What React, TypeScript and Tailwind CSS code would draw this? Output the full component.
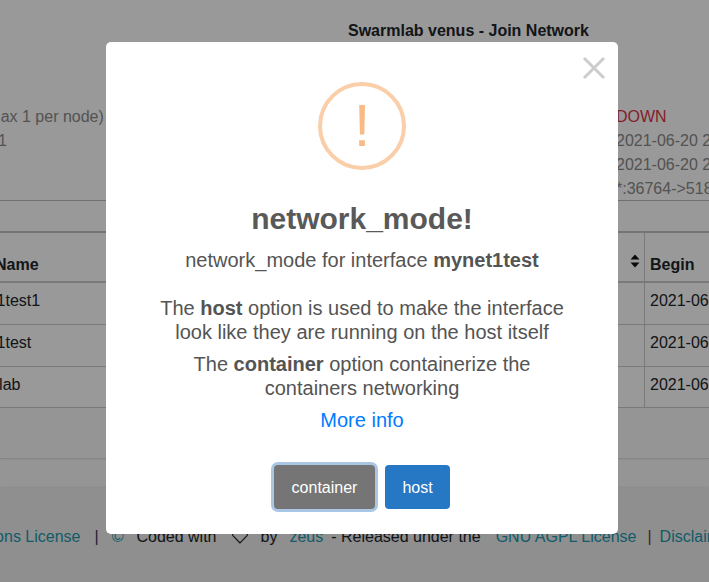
import React from 'react';

const infoLeft = ['(max 1 per node)', '1'];
const infoRight = ['2021-06-20 21:14:03', '2021-06-20 21:14:03', '*:36764->5180'];

const rows = [
  { name: 'mynet1test1', begin: '2021-06-20' },
  { name: 'mynet1test', begin: '2021-06-20' },
  { name: 'swarmlab', begin: '2021-06-20' },
];

const SortIcon = () => (
  <svg viewBox="0 0 10 14" className="w-[10px] h-[14px] fill-current">
    <path d="M5 0.5 9.5 5.5H0.5Z" />
    <path d="M5 13.5 0.5 8.5H9.5Z" />
  </svg>
);

const HeartIcon = () => (
  <svg viewBox="0 0 16 14" className="w-[16px] h-[14px] fill-none stroke-current" strokeWidth="1.2">
    <path d="M8 13 1.4 6.2C0 4.6 .3 2.200 2 1.100 3.800 0 5.900.8 8 3c2.100-2.200 4.200-3 6-1.900 1.700 1.100 2 3.500.6 5.100Z" />
  </svg>
);

export default function App() {
  return (
    <div className="relative h-[582px] w-[709px] overflow-hidden bg-white font-['Liberation_Sans',sans-serif] text-base text-[#212529]">
      {/* page behind the dialog */}
      <div className="h-[201px] border-b border-[#bbbbbb] flex">
        <div className="w-[106px] shrink-0 overflow-hidden pt-[105px] text-[#8a8a8a]">
          <div className="-ml-[18px] flex flex-col leading-6 whitespace-nowrap">
            <span>{infoLeft[0]}</span>
            <span className="ml-[18px] -indent-[2px]">{infoLeft[1]}</span>
          </div>
        </div>
        <div className="flex-1 flex flex-col min-w-0">
          <div className="pt-[21px] pl-[242px] h-[105px] font-bold text-[#212529] leading-5 whitespace-nowrap">Swarmlab venus - Join Network</div>
          <div className="pl-[510px] flex flex-col leading-6 whitespace-nowrap text-[#8a8a8a] overflow-hidden">
            <span className="text-[#dc3545]">DOWN</span>
            {infoRight.map((t, i) => (
              <span key={i}>{t}</span>
            ))}
          </div>
        </div>
      </div>

      <div className="h-[30px]" />

      <div className="border-t-2 border-[#c4c4c4] h-[177px] border-b border-b-[#c4c4c4]">
        <div className="flex h-[50px] border-b-2 border-[#cccccc] font-bold">
          <div className="flex-1 pt-[20px] overflow-hidden leading-6 whitespace-nowrap">
            <span className="block -ml-[5px]">Name</span>
          </div>
          <div className="w-[14px] pt-[21px] text-[#111111]"><SortIcon /></div>
          <div className="w-[65px] shrink-0 border-l border-[#cccccc] pl-[5px] pt-[20px] leading-6 whitespace-nowrap">Begin</div>
        </div>
        {rows.map((r, i) => (
          <div key={i} className="flex h-[42px] border-b border-[#cccccc] last:h-[41px]">
            <div className="flex-1 overflow-hidden pt-[6px] leading-6 whitespace-nowrap">
              <span className={i === 2 ? 'block -ml-[48px]' : 'block -ml-[47px]'}>{r.name}</span>
            </div>
            <div className="w-[65px] shrink-0 border-l border-[#cccccc] pl-[5px] pt-[6px] leading-6 overflow-hidden whitespace-nowrap">{r.begin}</div>
          </div>
        ))}
      </div>

      <div className="bg-[#f9f9f9]">
        <div className="h-[51px] border-b border-[#dcdcdc] shadow-[0_1px_2px_rgba(0,0,0,0.05)]" />
        <div className="h-[29px]" />
      </div>

      <footer className="h-[94px] bg-[#eeeeee] pt-[37px] overflow-hidden shadow-[0_-1px_2px_rgba(0,0,0,0.08)]">
        <div className="flex items-center leading-6 whitespace-nowrap -ml-[52px]">
          <a className="text-[#2299ae]">Commons License</a>
          <span className="ml-[14px] text-[#343a60]">|</span>
          <span className="ml-[13px] text-[#2299ae]">©</span>
          <span className="ml-[13px]">Coded with</span>
          <span className="ml-[15px]"><HeartIcon /></span>
          <span className="ml-[13px]">by</span>
          <a className="ml-[12px] text-[#2299ae]">zeus</a>
          <span className="ml-[8px]">- Released under the</span>
          <a className="ml-[15px] text-[#2299ae]">GNU AGPL License</a>
          <span className="ml-[11px] text-[#7a3a20]">|</span>
          <a className="ml-[8px] text-[#2299ae]">Disclaimer</a>
        </div>
      </footer>

      {/* overlay + dialog */}
      <div className="absolute inset-0 bg-black/40 pt-[42px] pl-[106px]">
        <div className="relative w-[512px] h-[492px] rounded-[5px] bg-white flex flex-col items-center pt-[40px] text-[#545454]">
          <button className="absolute right-[12px] top-[14px] text-[#cccccc]">
            <svg viewBox="0 0 24 24" className="w-[24px] h-[24px] stroke-current fill-none" strokeWidth="3">
              <path d="M2 2 22 22M22 2 2 22" />
            </svg>
          </button>
          <div className="w-[88px] h-[88px] rounded-full border-[4px] border-[#facea8] flex items-center justify-center text-[60px] leading-none text-[#f8bb86]">
            !
          </div>
          <h2 className="mt-[22px] text-[30px] leading-[54px] font-bold text-[#595959]">network_mode!</h2>
          <p className="text-[20px] leading-[27px] mt-[1px]">network_mode for interface <b>mynet1test</b></p>
          <p className="text-[20px] leading-6 mt-[22px] text-center w-[420px]">
            The <b>host</b> option is used to make the interface look like they are running on the host itself
          </p>
          <p className="text-[20px] leading-6 mt-[8px] text-center w-[420px]">
            The <b>container</b> option containerize the containers networking
          </p>
          <a className="text-[20px] leading-6 mt-[8px] text-[#007bff]">More info</a>
          <div className="mt-[33px] flex items-center gap-[10px]">
            <button className="h-[44px] w-[101px] pt-[1px] rounded-[4px] bg-[#757575] text-white text-base ring-[3px] ring-[#a9c7e4]">container</button>
            <button className="h-[44px] w-[65px] pt-[1px] rounded-[4px] bg-[#2778c4] text-white text-base">host</button>
          </div>
        </div>
      </div>
    </div>
  );
}
